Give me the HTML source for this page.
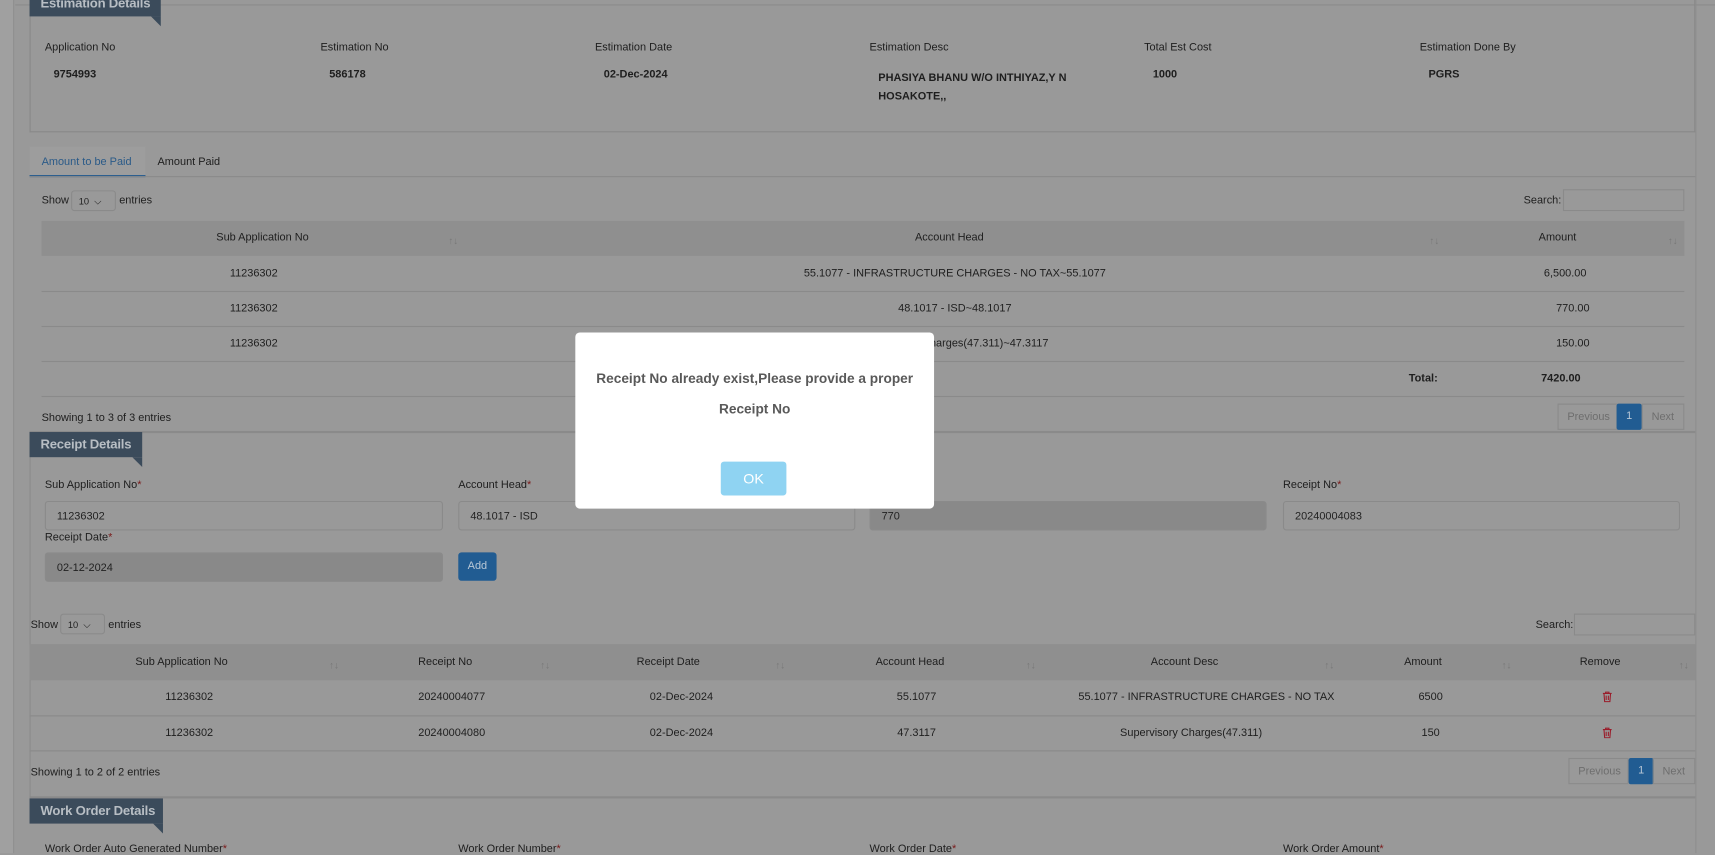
<!DOCTYPE html>
<html><head><meta charset="utf-8"><style>
*{box-sizing:border-box;margin:0;padding:0}
html,body{width:1715px;height:853px;overflow:hidden;background:#999}
#w{position:absolute;left:0;top:0;width:1568px;height:780px;transform:scale(1.09375);transform-origin:0 0;font-family:"Liberation Sans",sans-serif;font-size:10px;color:#1e1e1e}
.a{position:absolute;white-space:nowrap}
.b{font-weight:bold}
.tab{position:absolute;background:#3b4b5b;color:#b8bec4;font-weight:bold;font-size:12px;padding:4px 10px;height:23px;white-space:nowrap;letter-spacing:-0.2px}
.tab:after{content:"";position:absolute;right:0;bottom:-9px;border-left:9px solid transparent;border-top:9px solid #3b4b5b}
.inp{position:absolute;border:1px solid #8a8a8a;border-radius:3px;height:27px;padding:8px 10px;background:#999;color:#222}
.dis{background:#898989}
.th{position:absolute;background:#8f8f8f}
.line{position:absolute;height:1px;background:#8a8a8a}
.r{color:#7a1a1a}
.sel{position:absolute;border:1px solid #8a8a8a;border-radius:3px;height:19px;font-size:8.5px;padding:4px 6px}
.srt{position:absolute;color:#777;font-size:9px}
.pg{position:absolute;border:1px solid #8a8a8a;height:24px;color:#6e6e6e;padding:6px 8px;font-size:10px}
.pg1{position:absolute;background:#215c92;color:#b9c8d6;height:24px;width:23px;text-align:center;padding-top:6px;border-radius:2px}
.c{position:absolute;transform:translateX(-50%);white-space:nowrap}
</style></head><body><div id="w">
<div class="a" style="left:0;top:0;width:13px;height:780px;background:#a0a0a0;border-right:1px solid #8e8e8e"></div>
<div class="line" style="left:14px;top:4px;width:1554px"></div>
<!-- estimation -->
<div class="a" style="left:27px;top:0;width:1523px;height:121px;border:1px solid #888;border-top:none"></div>
<div class="tab" style="left:27px;top:-8px;width:120px">Estimation Details</div>
<div class="a" style="left:41px;top:38px">Application No</div>
<div class="a" style="left:293px;top:38px">Estimation No</div>
<div class="a" style="left:544px;top:38px">Estimation Date</div>
<div class="a" style="left:795px;top:38px">Estimation Desc</div>
<div class="a" style="left:1046px;top:38px">Total Est Cost</div>
<div class="a" style="left:1298px;top:38px">Estimation Done By</div>
<div class="a b" style="left:49px;top:63px">9754993</div>
<div class="a b" style="left:301px;top:63px">586178</div>
<div class="a b" style="left:552px;top:63px">02-Dec-2024</div>
<div class="a b" style="left:803px;top:63px;line-height:17px">PHASIYA BHANU W/O INTHIYAZ,Y N<br>HOSAKOTE,,</div>
<div class="a b" style="left:1054px;top:63px">1000</div>
<div class="a b" style="left:1306px;top:63px">PGRS</div>
<!-- tabs -->
<div class="a" style="left:27px;top:134px;width:106px;height:28px;background:#9d9d9d;border-bottom:2px solid #2d5f8f"></div>
<div class="a" style="left:38px;top:143px;color:#2a5a88">Amount to be Paid</div>
<div class="a" style="left:144px;top:143px">Amount Paid</div>
<div class="line" style="left:27px;top:161px;width:1523px"></div>
<div class="a" style="left:38px;top:178px">Show</div>
<div class="sel" style="left:65px;top:174px;width:41px">10 &nbsp;⌵</div>
<div class="a" style="left:109px;top:178px">entries</div>
<div class="a" style="left:1393px;top:178px">Search:</div>
<div class="a" style="left:1429px;top:173px;width:111px;height:20px;border:1px solid #8a8a8a"></div>
<div class="th" style="left:38px;top:202px;width:1502px;height:32px"></div>
<div class="c" style="left:240px;top:212px">Sub Application No</div><div class="srt" style="left:410px;top:215px">↑↓</div>
<div class="c" style="left:868px;top:212px">Account Head</div><div class="srt" style="left:1307px;top:215px">↑↓</div>
<div class="c" style="left:1424px;top:212px">Amount</div><div class="srt" style="left:1525px;top:215px">↑↓</div>
<div class="line" style="left:38px;top:266px;width:1502px"></div>
<div class="line" style="left:38px;top:298px;width:1502px"></div>
<div class="line" style="left:38px;top:330px;width:1502px"></div>
<div class="line" style="left:38px;top:362px;width:1502px"></div>
<div class="c" style="left:232px;top:245px">11236302</div><div class="c" style="left:873px;top:245px">55.1077 - INFRASTRUCTURE CHARGES - NO TAX~55.1077</div><div class="c" style="left:1431px;top:245px">6,500.00</div>
<div class="c" style="left:232px;top:277px">11236302</div><div class="c" style="left:873px;top:277px">48.1017 - ISD~48.1017</div><div class="c" style="left:1438px;top:277px">770.00</div>
<div class="c" style="left:232px;top:309px">11236302</div><div class="c" style="left:873px;top:309px">Supervisory Charges(47.311)~47.3117</div><div class="c" style="left:1438px;top:309px">150.00</div>
<div class="a b" style="left:1288px;top:341px">Total:</div><div class="a b" style="left:1409px;top:341px">7420.00</div>
<div class="a" style="left:38px;top:377px">Showing 1 to 3 of 3 entries</div>
<div class="pg" style="left:1424px;top:369px;width:55px">Previous</div><div class="pg1" style="left:1478px;top:369px">1</div><div class="pg" style="left:1501px;top:369px;width:39px">Next</div>
<!-- receipt -->
<div class="line" style="left:27px;top:394px;width:1523px;height:2px"></div>
<div class="a" style="left:27px;top:395px;width:1px;height:335px;background:#8a8a8a"></div>
<div class="tab" style="left:27px;top:395px;width:103px">Receipt Details</div>
<div class="a" style="left:41px;top:438px">Sub Application No<span class="r">*</span></div>
<div class="a" style="left:419px;top:438px">Account Head<span class="r">*</span></div>
<div class="a" style="left:795px;top:438px">Amount<span class="r">*</span></div>
<div class="a" style="left:1173px;top:438px">Receipt No<span class="r">*</span></div>
<div class="inp" style="left:41px;top:458px;width:364px">11236302</div>
<div class="inp" style="left:419px;top:458px;width:363px">48.1017 - ISD</div>
<div class="inp dis" style="left:795px;top:458px;width:363px">770</div>
<div class="inp" style="left:1173px;top:458px;width:363px">20240004083</div>
<div class="a" style="left:41px;top:486px">Receipt Date<span class="r">*</span></div>
<div class="inp dis" style="left:41px;top:505px;width:364px">02-12-2024</div>
<div class="a" style="left:419px;top:505px;width:35px;height:26px;background:#215c92;color:#b9c8d6;border-radius:3px;text-align:center;padding-top:7px">Add</div>
<div class="a" style="left:28px;top:566px">Show</div>
<div class="sel" style="left:55px;top:561px;width:41px">10 &nbsp;⌵</div>
<div class="a" style="left:99px;top:566px">entries</div>
<div class="a" style="left:1404px;top:566px">Search:</div>
<div class="a" style="left:1439px;top:561px;width:111px;height:20px;border:1px solid #8a8a8a"></div>
<div class="th" style="left:27px;top:589px;width:1523px;height:33px"></div>
<div class="c" style="left:166px;top:600px">Sub Application No</div><div class="srt" style="left:301px;top:603px">↑↓</div>
<div class="c" style="left:407px;top:600px">Receipt No</div><div class="srt" style="left:494px;top:603px">↑↓</div>
<div class="c" style="left:611px;top:600px">Receipt Date</div><div class="srt" style="left:709px;top:603px">↑↓</div>
<div class="c" style="left:832px;top:600px">Account Head</div><div class="srt" style="left:938px;top:603px">↑↓</div>
<div class="c" style="left:1083px;top:600px">Account Desc</div><div class="srt" style="left:1211px;top:603px">↑↓</div>
<div class="c" style="left:1301px;top:600px">Amount</div><div class="srt" style="left:1373px;top:603px">↑↓</div>
<div class="c" style="left:1463px;top:600px">Remove</div><div class="srt" style="left:1535px;top:603px">↑↓</div>
<div class="line" style="left:27px;top:654px;width:1523px"></div>
<div class="line" style="left:27px;top:686px;width:1523px"></div>
<div class="c" style="left:173px;top:632px">11236302</div><div class="c" style="left:413px;top:632px">20240004077</div><div class="c" style="left:623px;top:632px">02-Dec-2024</div><div class="c" style="left:838px;top:632px">55.1077</div><div class="c" style="left:1103px;top:632px">55.1077 - INFRASTRUCTURE CHARGES - NO TAX</div><div class="c" style="left:1308px;top:632px">6500</div>
<div class="c" style="left:173px;top:665px">11236302</div><div class="c" style="left:413px;top:665px">20240004080</div><div class="c" style="left:623px;top:665px">02-Dec-2024</div><div class="c" style="left:838px;top:665px">47.3117</div><div class="c" style="left:1089px;top:665px">Supervisory Charges(47.311)</div><div class="c" style="left:1308px;top:665px">150</div>
<svg class="a" style="left:1465px;top:632px" width="9" height="10" viewBox="0 0 9 10"><path d="M0.5 2h8M3 2V0.8h3V2M1.5 2l.6 7.5h4.8L7.5 2M3.5 4v4M5.5 4v4" stroke="#9a1c2a" fill="none" stroke-width="1"/></svg>
<svg class="a" style="left:1465px;top:665px" width="9" height="10" viewBox="0 0 9 10"><path d="M0.5 2h8M3 2V0.8h3V2M1.5 2l.6 7.5h4.8L7.5 2M3.5 4v4M5.5 4v4" stroke="#9a1c2a" fill="none" stroke-width="1"/></svg>
<div class="a" style="left:28px;top:701px">Showing 1 to 2 of 2 entries</div>
<div class="pg" style="left:1434px;top:693px;width:55px">Previous</div><div class="pg1" style="left:1489px;top:693px">1</div><div class="pg" style="left:1511px;top:693px;width:39px">Next</div>
<!-- work order -->
<div class="line" style="left:27px;top:728px;width:1523px;height:2px"></div>
<div class="tab" style="left:27px;top:730px;width:122px">Work Order Details</div>
<div class="a" style="left:41px;top:771px">Work Order Auto Generated Number<span class="r">*</span></div>
<div class="a" style="left:419px;top:771px">Work Order Number<span class="r">*</span></div>
<div class="a" style="left:795px;top:771px">Work Order Date<span class="r">*</span></div>
<div class="a" style="left:1173px;top:771px">Work Order Amount<span class="r">*</span></div>
<div class="a" style="left:1550px;top:0;width:1px;height:780px;background:#8e8e8e"></div>
<!-- modal -->
<div class="a" style="left:526px;top:304px;width:328px;height:161px;background:#fff;border-radius:4px"></div>
<div class="c" style="left:690px;top:332px;font-weight:bold;font-size:12.5px;color:#595959;text-align:center;line-height:28px">Receipt No already exist,Please provide a proper<br>Receipt No</div>
<div class="a" style="left:659px;top:422px;width:60px;height:31px;background:#8fd3f2;border-radius:3px;color:#fff;font-size:13px;text-align:center;padding-top:8px">OK</div>
</div></body></html>
